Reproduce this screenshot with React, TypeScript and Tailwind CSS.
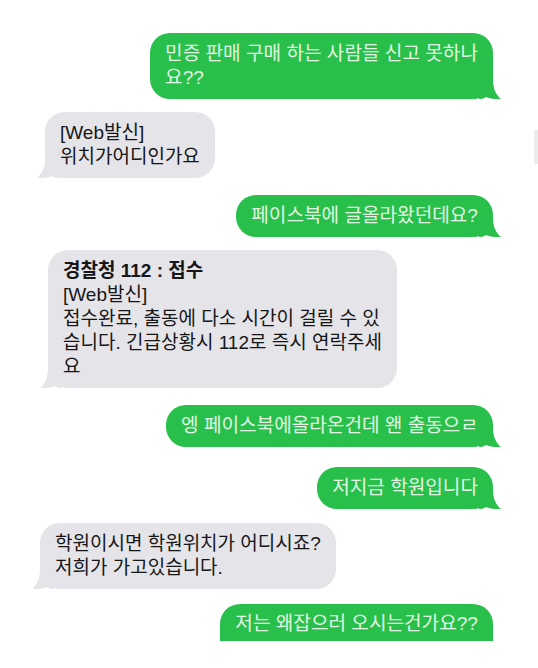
import type {ReactNode} from 'react';

const font = {fontFamily: '"Liberation Sans", "Noto Sans CJK KR", sans-serif'};

function Tail({side}: {side: 'left' | 'right'}) {
  const isRight = side === 'right';
  return (
    <svg
      width="22"
      height="20"
      viewBox="0 0 22 20"
      className={
        isRight
          ? 'absolute -right-[8px] bottom-0'
          : 'absolute -left-[8px] bottom-0 -scale-x-100'
      }
    >
      <path
        d="M0 0 H14 C14 10 17 16 22 20 C16 20.5 11 19.5 7 18 C5 19.5 3 20 0 20 Z"
        fill={isRight ? '#28c04b' : '#e4e4e9'}
      />
    </svg>
  );
}

function Sent({children, className = '', cut = false}: {children: ReactNode; className?: string; cut?: boolean}) {
  return (
    <div className={`flex justify-end pr-[45px] ${className}`}>
      <div
        className={`relative bg-[#28c04b] text-[#e2f7e3] px-[15px] ${
          cut ? 'rounded-t-[20px] pt-[8px] h-[37px]' : 'rounded-[20px] py-[9px]'
        }`}
      >
        <div className="text-[19.1px] leading-[24px] whitespace-nowrap">{children}</div>
        {!cut && <Tail side="right" />}
      </div>
    </div>
  );
}

function Received({children, className = ''}: {children: ReactNode; className?: string}) {
  return (
    <div className={`flex justify-start ${className}`}>
      <div className="relative bg-[#e4e4e9] text-[#161616] rounded-[20px] px-[15px] py-[9px]">
        <div className="text-[19px] leading-[24px] whitespace-nowrap">{children}</div>
        <Tail side="left" />
      </div>
    </div>
  );
}

export default function App() {
  return (
    <div className="relative w-[538px] h-[668px] bg-white overflow-hidden" style={font}>
      <div className="flex flex-col pt-[33px]">
        <Sent>
          민증 판매 구매 하는 사람들 신고 못하나
          <br />
          요??
        </Sent>
        <Received className="mt-[13px] pl-[45px]">
          [Web발신]
          <br />
          위치가어디인가요
        </Received>
        <Sent className="mt-[17px]">페이스북에 글올라왔던데요?</Sent>
        <Received className="mt-[13px] pl-[48px]">
          <span className="font-bold">경찰청 112 : 접수</span>
          <br />
          [Web발신]
          <br />
          접수완료, 출동에 다소 시간이 걸릴 수 있
          <br />
          습니다. 긴급상황시 112로 즉시 연락주세
          <br />요
        </Received>
        <Sent className="mt-[17px]">엥 페이스북에올라온건데 왠 출동으ㄹ</Sent>
        <Sent className="mt-[20px]">저지금 학원입니다</Sent>
        <Received className="mt-[14px] pl-[40px]">
          학원이시면 학원위치가 어디시죠?
          <br />
          저희가 가고있습니다.
        </Received>
        <Sent className="mt-[15px]" cut>
          저는 왜잡으러 오시는건가요??
        </Sent>
      </div>
      <div className="absolute right-0 top-[130px] w-[4px] h-[34px] bg-[#ececec]" />
    </div>
  );
}
